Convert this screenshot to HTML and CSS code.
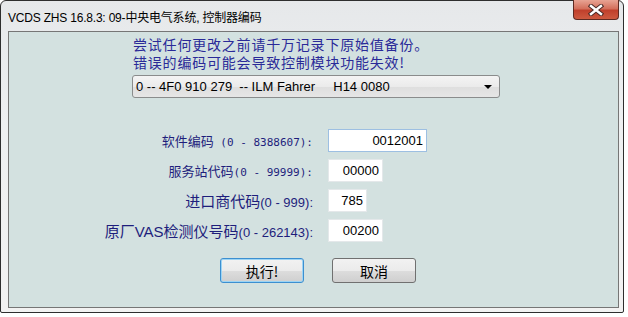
FILE: index.html
```html
<!DOCTYPE html>
<html lang="zh-CN">
<head>
    <meta charset="UTF-8">
    <title>VCDS ZHS 16.8.3: 09-中央电气系统, 控制器编码</title>
    <link rel="stylesheet" href="styles.css">
</head>
<body>

    <div class="window">
        <div class="titlebar">
            <span class="title">VCDS ZHS 16.8.3: 09-中央电气系统, 控制器编码</span>
            <button class="close-btn" aria-label="关闭">
                <svg width="16" height="12" viewBox="0 0 16 12">
                    <path d="M3 2 L13 10 M13 2 L3 10" stroke="#4a2a26" stroke-width="4.4" stroke-linecap="square"/>
                    <path d="M3 2 L13 10 M13 2 L3 10" stroke="#fff" stroke-width="2.4" stroke-linecap="square"/>
                </svg>
            </button>
        </div>

        <div class="panel">
            <div class="notice">
                <p>尝试任何更改之前请千万记录下原始值备份。</p>
                <p>错误的编码可能会导致控制模块功能失效!</p>
            </div>

            <div class="combo">
                <span class="combo-text">0 -- 4F0 910 279&nbsp; -- ILM Fahrer&nbsp;&nbsp;&nbsp;&nbsp; H14 0080</span>
                <span class="combo-arrow"></span>
            </div>

            <div class="fields">
                <label class="label small">软件编码<span class="mono"> (0 - 8388607):</span></label>
                <input class="field focused" style="width: 99px" value="0012001">

                <label class="label small">服务站代码<span class="mono">(0 - 99999):</span></label>
                <input class="field" style="width: 55px" value="00000">

                <label class="label">进口商代码<span class="latin">(0 - 999):</span></label>
                <input class="field" style="width: 39px" value="785">

                <label class="label">原厂<span class="latin-big">VAS</span>检测仪号码<span class="latin">(0 - 262143):</span></label>
                <input class="field" style="width: 55px" value="00200">
            </div>

            <div class="actions">
                <button class="btn default">执行!</button>
                <button class="btn">取消</button>
            </div>
        </div>
    </div>

</body>
</html>
```

FILE: styles.css
```css
body {
    margin: 0;
    background-color: #fff;
    font-family: "Liberation Sans", "Noto Sans CJK SC", sans-serif;
}
.window {
    width: 624px;
    height: 313px;
    box-sizing: border-box;
    border: 1px solid #2e2e2e;
    border-radius: 6px 6px 2px 2px;
    background: linear-gradient(#e6e8ea, #eef0f1 40%, #f2f2f2);
    display: flex;
    flex-direction: column;
}
.titlebar {
    height: 30px;
    display: flex;
    align-items: center;
    padding-left: 7px;
}
.title {
    font-size: 12px;
    color: #000;
    letter-spacing: -0.2px;
}
.close-btn {
    margin-left: auto;
    margin-right: 4px;
    align-self: flex-start;
    width: 46px;
    height: 20px;
    margin-top: -1px;
    padding: 0;
    border: 1px solid #5e2a22;
    border-top: none;
    border-radius: 0 0 4px 4px;
    background: linear-gradient(#e8a494, #d4705c 45%, #c0402c 55%, #cd5a40);
    display: flex;
    align-items: center;
    justify-content: center;
}
.panel {
    flex: 1;
    margin: 0 4px 4px 7px;
    border: 1px solid #767676;
    background-color: #d3e1e0;
}
.notice {
    margin-left: 124px;
    padding-top: 3px;
    font-family: "Noto Sans CJK SC", sans-serif;
    font-size: 14px;
    letter-spacing: 0.8px;
    line-height: 18px;
    color: #2a2a98;
}
.notice p {
    margin: 0;
    height: 18px;
}
.combo {
    margin: 4px 0 0 123px;
    width: 368px;
    height: 23px;
    box-sizing: border-box;
    border: 1px solid #8a8c8c;
    border-radius: 3px;
    background: linear-gradient(#f4f4f4, #ebebeb 50%, #dedede 51%, #e6e6e6);
    display: flex;
    align-items: center;
    padding: 0 7px 0 3px;
}
.combo-text {
    font-size: 13px;
    color: #000;
    white-space: pre;
}
.combo-arrow {
    margin-left: auto;
    width: 0;
    height: 0;
    border-left: 4px solid transparent;
    border-right: 4px solid transparent;
    border-top: 4px solid #000;
}
.fields {
    margin-top: 31px;
    display: grid;
    grid-template-columns: 304px auto;
    grid-auto-rows: 23px;
    column-gap: 15px;
    row-gap: 7px;
    align-items: center;
}
.label {
    justify-self: end;
    font-family: "Noto Sans CJK SC", sans-serif;
    font-size: 15px;
    color: #1e1e7c;
    white-space: pre;
}
.label.small {
    font-size: 13px;
}
.mono {
    font-family: "DejaVu Sans Mono", monospace;
    font-size: 11px;
}
.latin {
    font-family: "Liberation Sans", sans-serif;
    font-size: 13px;
}
.latin-big {
    font-family: "Liberation Sans", sans-serif;
    font-size: 15px;
}
.field {
    height: 23px;
    box-sizing: border-box;
    border: 1px solid #e4e8ea;
    background-color: #fff;
    padding: 0 3px;
    font-family: "Liberation Sans", sans-serif;
    font-size: 13px;
    text-align: right;
    color: #000;
}
.field.focused {
    border-color: #9dbfe2;
}
.actions {
    margin-top: 16px;
    padding-left: 211px;
    display: flex;
    gap: 28px;
}
.btn {
    width: 84px;
    height: 25px;
    border: 1px solid #707070;
    border-radius: 3px;
    background: linear-gradient(#f2f2f2, #ebebeb 50%, #dddddd 51%, #cfcfcf);
    font-family: "Noto Sans CJK SC", sans-serif;
    font-size: 14px;
    color: #000;
    padding: 0;
}
.btn.default {
    border-color: #3c8fd0;
    box-shadow: inset 0 0 0 1px #9cd4f4;
}
```
